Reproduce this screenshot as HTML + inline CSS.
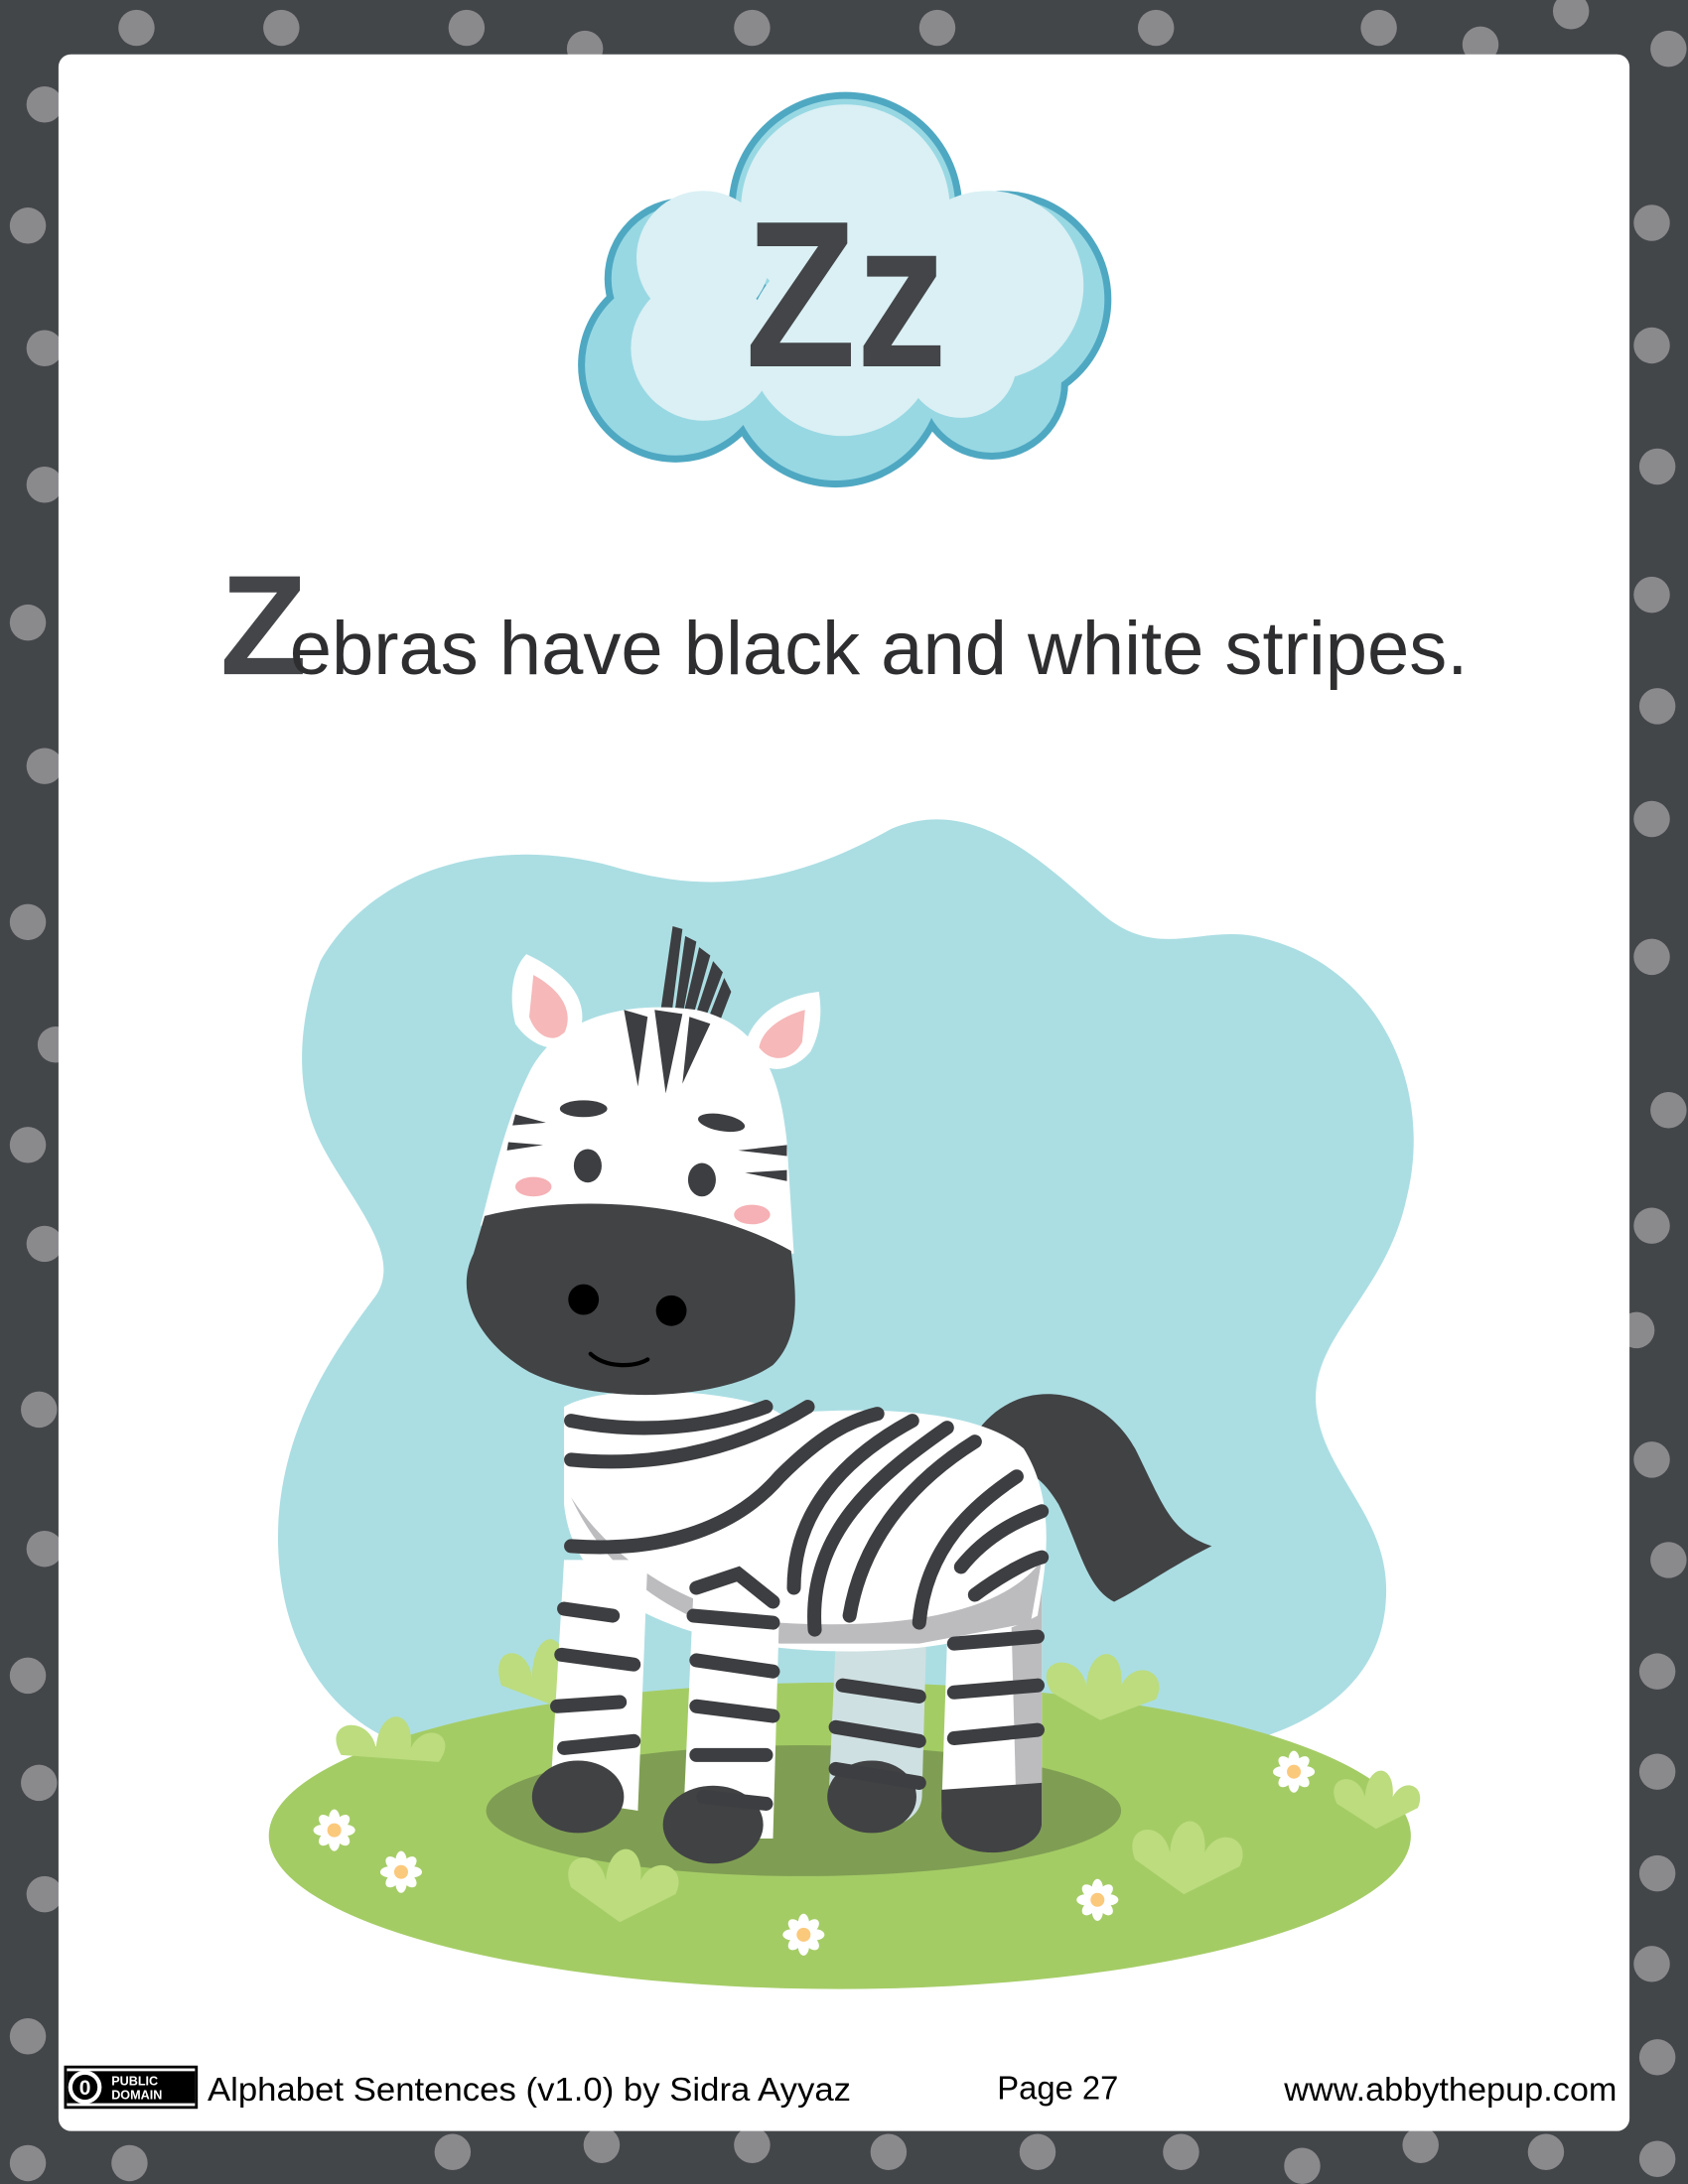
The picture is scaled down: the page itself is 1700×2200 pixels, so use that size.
<!DOCTYPE html>
<html><head><meta charset="utf-8"><style>
html,body{margin:0;padding:0;background:#434649;}
svg{display:block;}
</style></head><body>
<svg width="1700" height="2200" viewBox="0 0 1212 1568" preserveAspectRatio="none" xmlns="http://www.w3.org/2000/svg">
<rect width="1212" height="1568" fill="#434649"/>
<g fill="#8a8a8d">
<circle cx="98" cy="20" r="13"/><circle cx="202" cy="20" r="13"/><circle cx="335" cy="20" r="13"/><circle cx="420" cy="35" r="13"/><circle cx="540" cy="20" r="13"/><circle cx="673" cy="20" r="13"/><circle cx="830" cy="20" r="13"/><circle cx="990" cy="20" r="13"/><circle cx="1063" cy="32" r="13"/><circle cx="1128" cy="8" r="13"/>
<circle cx="32" cy="75" r="13"/><circle cx="20" cy="162" r="13"/><circle cx="32" cy="250" r="13"/><circle cx="32" cy="348" r="13"/><circle cx="20" cy="447" r="13"/><circle cx="32" cy="550" r="13"/><circle cx="20" cy="662" r="13"/><circle cx="40" cy="750" r="13"/><circle cx="20" cy="822" r="13"/><circle cx="32" cy="893" r="13"/><circle cx="28" cy="1012" r="13"/><circle cx="32" cy="1112" r="13"/><circle cx="20" cy="1203" r="13"/><circle cx="28" cy="1280" r="13"/><circle cx="32" cy="1360" r="13"/><circle cx="20" cy="1462" r="13"/><circle cx="20" cy="1553" r="13"/>
<circle cx="1198" cy="35" r="13"/><circle cx="1186" cy="160" r="13"/><circle cx="1186" cy="248" r="13"/><circle cx="1190" cy="335" r="13"/><circle cx="1186" cy="427" r="13"/><circle cx="1190" cy="507" r="13"/><circle cx="1186" cy="588" r="13"/><circle cx="1186" cy="687" r="13"/><circle cx="1198" cy="797" r="13"/><circle cx="1186" cy="880" r="13"/><circle cx="1175" cy="955" r="13"/><circle cx="1186" cy="1048" r="13"/><circle cx="1198" cy="1120" r="13"/><circle cx="1190" cy="1200" r="13"/><circle cx="1190" cy="1272" r="13"/><circle cx="1190" cy="1345" r="13"/><circle cx="1186" cy="1410" r="13"/><circle cx="1190" cy="1477" r="13"/><circle cx="1190" cy="1550" r="13"/>
<circle cx="93" cy="1553" r="13"/><circle cx="325" cy="1545" r="13"/><circle cx="432" cy="1540" r="13"/><circle cx="540" cy="1540" r="13"/><circle cx="638" cy="1545" r="13"/><circle cx="745" cy="1545" r="13"/><circle cx="848" cy="1545" r="13"/><circle cx="935" cy="1555" r="13"/><circle cx="1020" cy="1540" r="13"/><circle cx="1110" cy="1545" r="13"/>
</g>
<rect x="42" y="39" width="1128" height="1491" rx="9" fill="#ffffff"/>

<!-- cloud -->
<g fill="#4fa8c2">
<circle cx="607" cy="150" r="84"/><circle cx="492" cy="200" r="58"/><circle cx="485" cy="262" r="70"/><circle cx="600" cy="270" r="80"/><circle cx="720" cy="215" r="78"/><circle cx="712" cy="275" r="55"/>
</g>
<g fill="#98d8e3">
<circle cx="607" cy="150" r="79"/><circle cx="492" cy="200" r="53"/><circle cx="485" cy="262" r="65"/><circle cx="600" cy="270" r="75"/><circle cx="720" cy="215" r="73"/><circle cx="712" cy="275" r="50"/>
</g>
<g fill="#daf0f4">
<circle cx="607" cy="150" r="75"/><circle cx="505" cy="185" r="48"/><circle cx="505" cy="250" r="52"/><circle cx="605" cy="245" r="68"/><circle cx="710" cy="205" r="68"/><circle cx="690" cy="260" r="40"/>
</g>
<text x="535" y="263" font-family="Liberation Sans, sans-serif" font-weight="bold" font-size="150" fill="#434548" textLength="145" lengthAdjust="spacingAndGlyphs">Zz</text>

<!-- sentence -->
<text x="158" y="484" font-family="Liberation Sans, sans-serif" fill="#2e2e30"><tspan font-size="102" font-weight="bold" fill="#434548">Z</tspan><tspan font-size="54" x="208" textLength="846" lengthAdjust="spacingAndGlyphs">ebras have black and white stripes.</tspan></text>

<!-- blob -->
<path d="M230,690 C270,620 360,600 440,622 C500,640 560,640 640,595 C700,570 750,620 790,655 C830,690 860,665 900,672 C990,690 1030,780 1010,860 C995,930 940,960 945,1010 C950,1060 1000,1090 995,1150 C990,1230 900,1260 820,1260 L320,1260 C240,1250 195,1180 200,1090 C205,1020 240,970 270,930 C290,900 250,860 230,820 C210,780 215,730 230,690 Z" fill="#abdee3"/>
<!-- grass -->
<ellipse cx="603" cy="1318" rx="410" ry="110" fill="#a4cc65"/>
<ellipse cx="577" cy="1300" rx="228" ry="47" fill="#7f9e53"/>
<!-- tufts -->
<g fill="#bcdc7e">
<path d="M360,1210 c-10,-30 20,-30 22,-5 c0,-35 25,-40 25,0 l5,25 z"/>
<path d="M245,1260 c-15,-25 20,-30 25,-5 c2,-30 28,-30 25,0 c10,-20 35,-10 20,10 z"/>
<path d="M410,1355 c-10,-25 20,-30 25,-5 c2,-30 28,-30 25,0 c10,-20 35,-10 25,10 l-40,20 z"/>
<path d="M755,1215 c-15,-25 20,-30 25,-5 c2,-30 28,-30 25,0 c10,-20 35,-10 25,10 l-40,15 z"/>
<path d="M815,1335 c-10,-25 20,-30 25,-5 c2,-30 28,-30 25,0 c10,-20 35,-10 25,10 l-40,20 z"/>
<path d="M960,1295 c-10,-20 15,-25 20,-5 c2,-25 22,-25 20,0 c8,-15 25,-8 18,8 l-30,15 z"/>
</g>
<defs>
<g id="fl"><g fill="#fff"><ellipse cx="0" cy="-8" rx="4" ry="7"/><ellipse cx="0" cy="8" rx="4" ry="7"/><ellipse cx="-8" cy="0" rx="7" ry="4"/><ellipse cx="8" cy="0" rx="7" ry="4"/><ellipse cx="6" cy="6" rx="4" ry="6" transform="rotate(-45 6 6)"/><ellipse cx="-6" cy="-6" rx="4" ry="6" transform="rotate(-45 -6 -6)"/><ellipse cx="6" cy="-6" rx="4" ry="6" transform="rotate(45 6 -6)"/><ellipse cx="-6" cy="6" rx="4" ry="6" transform="rotate(45 -6 6)"/></g><circle r="5" fill="#fbc97c"/></g>
</defs>
<use href="#fl" x="240" y="1314"/>
<use href="#fl" x="288" y="1344"/>
<use href="#fl" x="577" y="1389"/>
<use href="#fl" x="788" y="1364"/>
<use href="#fl" x="929" y="1272"/>

<!-- tail -->
<path d="M700,1030 C730,985 790,995 815,1040 C835,1080 840,1100 870,1110 C840,1125 820,1140 800,1150 C780,1140 775,1110 760,1080 C745,1055 730,1050 705,1055 Z" fill="#414244"/>
<!-- back legs -->
<path d="M600,1180 L665,1180 L662,1290 C660,1320 598,1320 595,1290 Z" fill="#cfe0e2"/>
<ellipse cx="626" cy="1290" rx="32" ry="26" fill="#414244"/>
<path d="M682,1120 L748,1120 L748,1310 C745,1335 680,1340 676,1300 Z" fill="#fff"/>
<path d="M725,1120 L748,1120 L748,1310 L730,1310 Z" fill="#bcbcbf"/>
<path d="M676,1285 L748,1280 L748,1310 C745,1335 680,1340 676,1305 Z" fill="#414244"/>
<!-- body -->
<path d="M405,1010 C440,990 540,1000 560,1015 C620,1010 700,1010 735,1040 C760,1080 750,1130 745,1160 C700,1185 600,1195 510,1175 C450,1160 410,1130 405,1080 Z" fill="#fff"/>
<path d="M410,1075 C440,1140 500,1170 560,1180 L660,1180 L740,1165 L748,1120 C720,1160 640,1170 560,1165 C490,1155 440,1120 410,1075 Z" fill="#bcbcbf"/>
<!-- front legs -->
<path d="M405,1120 L465,1120 L458,1300 L395,1290 Z" fill="#fff"/>
<path d="M498,1140 L560,1140 L555,1320 L490,1320 Z" fill="#fff"/>
<ellipse cx="415" cy="1290" rx="33" ry="26" fill="#414244"/>
<ellipse cx="512" cy="1310" rx="36" ry="28" fill="#414244"/>
<!-- stripes -->
<g fill="none" stroke="#3d3e41" stroke-width="10" stroke-linecap="round">
<path d="M410,1020 C460,1030 510,1025 550,1010"/>
<path d="M410,1048 C480,1055 540,1035 580,1010"/>
<path d="M410,1110 C480,1115 530,1095 560,1060 C590,1030 610,1020 630,1015"/>
<path d="M570,1140 C570,1090 600,1050 655,1020"/>
<path d="M585,1170 C580,1100 630,1060 680,1025"/>
<path d="M610,1160 C620,1100 660,1060 700,1035"/>
<path d="M660,1165 C665,1110 700,1080 730,1060"/>
<path d="M690,1125 C710,1100 735,1090 748,1085"/>
<path d="M700,1145 C720,1130 740,1120 748,1118"/>
<path d="M405,1155 L440,1160"/><path d="M403,1188 L455,1195"/><path d="M400,1225 L445,1222"/><path d="M405,1255 L455,1250"/>
<path d="M498,1160 L555,1165"/><path d="M500,1192 L555,1200"/><path d="M500,1225 L555,1232"/><path d="M500,1260 L550,1260"/><path d="M505,1290 L550,1295"/>
<path d="M500,1140 L530,1130 L555,1150"/>
<path d="M605,1210 L660,1218"/><path d="M600,1240 L660,1250"/><path d="M600,1270 L660,1280"/>
<path d="M685,1180 L745,1175"/><path d="M685,1215 L745,1210"/><path d="M685,1248 L745,1242"/>
</g>
<!-- ears -->
<path d="M378,685 C410,700 425,720 415,745 C400,760 380,750 370,735 C365,715 368,695 378,685 Z" fill="#fff"/>
<path d="M383,700 C405,712 412,728 405,742 C395,750 384,742 380,730 Z" fill="#f6b8b9"/>
<path d="M588,712 C560,715 540,730 535,750 C545,775 570,770 582,755 C590,740 590,725 588,712 Z" fill="#fff"/>
<path d="M578,725 C560,730 547,740 545,752 C555,765 570,760 576,748 Z" fill="#f6b8b9"/>
<!-- mane -->
<g fill="#3d3e41">
<path d="M483,665 L490,667 L482,730 L474,728 Z"/>
<path d="M492,672 L500,676 L490,730 L484,730 Z"/>
<path d="M502,680 L510,686 L497,732 L490,731 Z"/>
<path d="M512,690 L519,698 L505,735 L498,733 Z"/>
<path d="M520,702 L525,712 L515,738 L507,735 Z"/>
</g>
<!-- head -->
<path d="M380,770 C400,730 450,718 500,725 C545,735 560,770 565,820 L570,900 L345,880 C355,840 365,800 380,770 Z" fill="#fff"/>
<g fill="#3d3e41">
<path d="M448,725 L458,780 L465,730 Z"/><path d="M470,725 L478,785 L490,728 Z"/><path d="M495,730 L490,778 L510,735 Z"/>
<ellipse cx="419" cy="796" rx="17" ry="6"/><ellipse cx="518" cy="806" rx="17" ry="6" transform="rotate(10 518 806)"/>
<ellipse cx="422" cy="837" rx="10" ry="12"/><ellipse cx="504" cy="847" rx="10" ry="12"/>
<path d="M370,800 L392,806 L368,808 Z"/><path d="M365,820 L390,822 L364,826 Z"/>
<path d="M565,822 L530,826 L565,830 Z"/><path d="M565,840 L535,842 L565,848 Z"/>
</g>
<ellipse cx="383" cy="852" rx="13" ry="7" fill="#f5b1b5"/>
<ellipse cx="540" cy="872" rx="13" ry="7" fill="#f5b1b5"/>
<!-- muzzle -->
<path d="M348,873 C420,855 510,865 568,898 C572,930 575,960 555,980 C520,1005 430,1010 380,985 C345,965 325,930 340,900 Z" fill="#424345"/>
<circle cx="419" cy="933" r="11" fill="#000"/><circle cx="482" cy="941" r="11" fill="#000"/>
<path d="M424,972 C435,982 455,982 465,976" fill="none" stroke="#000" stroke-width="3" stroke-linecap="round"/>

<!-- footer -->
<g transform="translate(46,1483)">
<rect x="0" y="0" width="96" height="31" fill="#000"/>
<rect x="2" y="2" width="92" height="27" fill="#fff"/>
<rect x="2" y="4" width="92" height="23" fill="#000"/>
<circle cx="15" cy="15.5" r="12" fill="#fff"/><circle cx="15" cy="15.5" r="9" fill="#000"/>
<text x="15" y="21" text-anchor="middle" font-family="Liberation Sans, sans-serif" font-weight="bold" font-size="15" fill="#fff">0</text>
<text x="34" y="14" font-family="Liberation Sans, sans-serif" font-weight="bold" font-size="9" fill="#fff">PUBLIC</text>
<text x="34" y="24" font-family="Liberation Sans, sans-serif" font-weight="bold" font-size="9" fill="#fff">DOMAIN</text>
</g>
<g font-family="Liberation Sans, sans-serif" font-size="24" fill="#000">
<text x="149" y="1508" textLength="462" lengthAdjust="spacingAndGlyphs">Alphabet Sentences (v1.0) by Sidra Ayyaz</text>
<text x="716" y="1507" textLength="87" lengthAdjust="spacingAndGlyphs">Page 27</text>
<text x="922" y="1508" textLength="239" lengthAdjust="spacingAndGlyphs">www.abbythepup.com</text>
</g>
</svg>
</body></html>
